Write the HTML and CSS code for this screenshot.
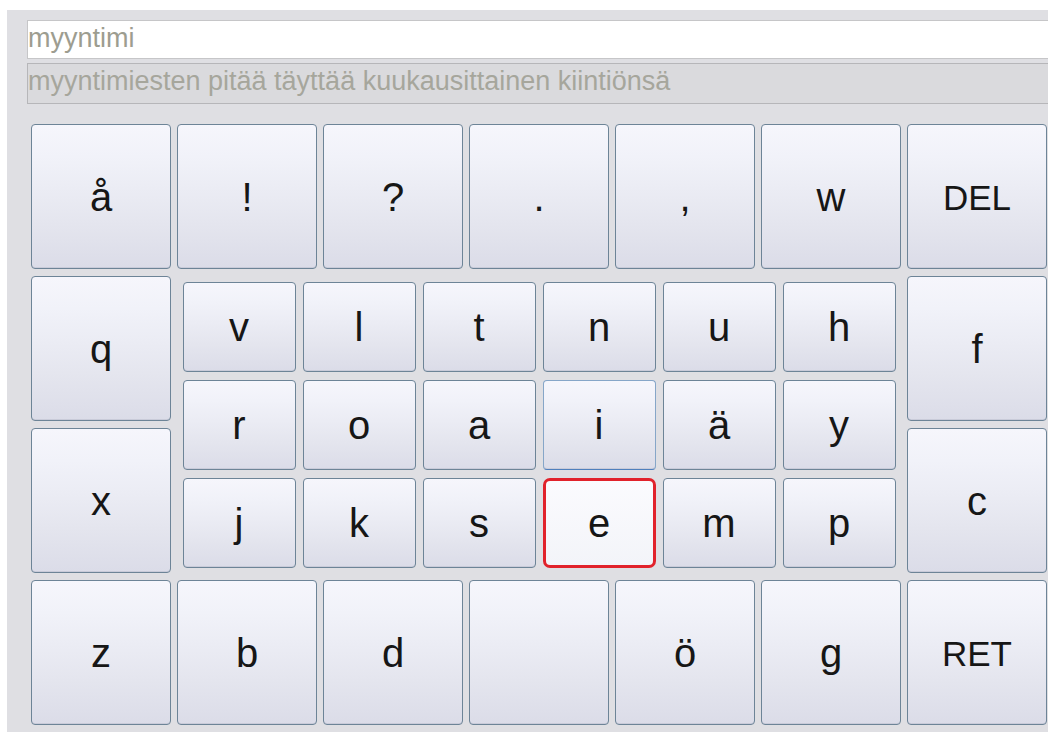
FILE: index.html
```html
<!DOCTYPE html>
<html lang="fi">
<head>
<meta charset="utf-8">
<title>Näppäimistö</title>
<link rel="stylesheet" href="styles.css">
</head>
<body>
<div class="panel">
  <div class="field field--input">myyntimi</div>
  <div class="field field--suggestion">myyntimiesten pitää täyttää kuukausittainen kiintiönsä</div>

  <div class="keyboard">
    <!-- top row -->
    <div class="key">å</div>
    <div class="key">!</div>
    <div class="key">?</div>
    <div class="key">.</div>
    <div class="key">,</div>
    <div class="key">w</div>
    <div class="key key--word">DEL</div>

    <!-- side columns -->
    <div class="key key--left-top">q</div>
    <div class="key key--left-bottom">x</div>

    <!-- central letter block -->
    <div class="letters">
      <div class="key">v</div>
      <div class="key">l</div>
      <div class="key">t</div>
      <div class="key">n</div>
      <div class="key">u</div>
      <div class="key">h</div>
      <div class="key">r</div>
      <div class="key">o</div>
      <div class="key">a</div>
      <div class="key key--hover">i</div>
      <div class="key">ä</div>
      <div class="key">y</div>
      <div class="key">j</div>
      <div class="key">k</div>
      <div class="key">s</div>
      <div class="key key--selected">e</div>
      <div class="key">m</div>
      <div class="key">p</div>
    </div>

    <div class="key key--right-top">f</div>
    <div class="key key--right-bottom">c</div>

    <!-- bottom row -->
    <div class="key key--bottom">z</div>
    <div class="key key--bottom">b</div>
    <div class="key key--bottom">d</div>
    <div class="key key--bottom"></div>
    <div class="key key--bottom">ö</div>
    <div class="key key--bottom">g</div>
    <div class="key key--bottom key--word">RET</div>
  </div>
</div>
</body>
</html>
```

FILE: styles.css
```css
html, body {
  margin: 0;
  padding: 0;
  background: #ffffff;
  overflow: hidden;
}

body {
  width: 1048px;
  height: 732px;
}

.panel {
  margin: 10px 0 0 7px;
  height: 722px;
  padding: 10px 0 0 20px;
  box-sizing: border-box;
  background: #dfdfe3;
  overflow: hidden;
}

.field {
  height: 37px;
  margin-right: -10px;
  line-height: 34px;
  font-family: "Liberation Sans", Arial, sans-serif;
  font-size: 27px;
  white-space: nowrap;
  box-sizing: content-box;
}

.field--input {
  background: #ffffff;
  border: 1px solid #c6c6c8;
  color: #9d9d90;
}

.field--suggestion {
  height: 39px;
  margin-top: 4px;
  background: #dadadd;
  border: 1px solid #b6b6b9;
  color: #a6a69c;
}

.keyboard {
  margin: 20px 0 0 4px;
  display: grid;
  grid-template-columns: repeat(7, 140px);
  grid-template-rows: repeat(4, 145px);
  column-gap: 6px;
  row-gap: 7px;
}

.key {
  display: flex;
  align-items: center;
  justify-content: center;
  padding-top: 2px;
  box-sizing: border-box;
  border: 1px solid #6d8497;
  border-radius: 4px;
  background: linear-gradient(to bottom,
    #f6f6fc 0%, #f1f2f9 22%, #ebecf4 45%, #e4e5ee 70%, #dbdce8 100%);
  box-shadow: inset 0 -1px 0 #c9cbd9;
  font-family: "Liberation Sans", Arial, sans-serif;
  font-size: 40px;
  color: #161616;
}

.key--word {
  font-size: 35px;
}

.key--left-top { grid-column: 1; grid-row: 2; }
.key--left-bottom { grid-column: 1; grid-row: 3; }
.key--right-top { grid-column: 7; grid-row: 2; }
.key--right-bottom { grid-column: 7; grid-row: 3; }
.key--bottom { grid-row: 4; }

.letters {
  grid-column: 2 / 7;
  grid-row: 2 / 4;
  display: grid;
  grid-template-columns: repeat(6, 113px);
  grid-template-rows: repeat(3, 90px);
  column-gap: 7px;
  row-gap: 8px;
  justify-content: center;
  align-content: center;
}

.key--hover {
  border-color: #86a6c8;
  border-bottom-color: #4f7fbd;
}

.key--selected {
  border: 3px solid #e1222b;
  border-radius: 7px;
  background: linear-gradient(to bottom, #fbfbfe 0%, #f3f4f9 100%);
  box-shadow: none;
}
```
